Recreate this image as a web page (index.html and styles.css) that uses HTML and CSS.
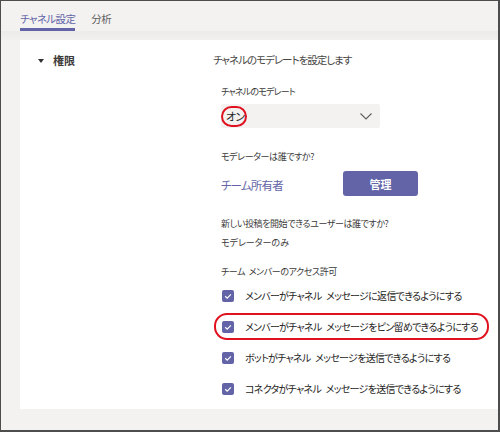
FILE: index.html
```html
<!DOCTYPE html>
<html lang="ja">
<head>
<meta charset="utf-8">
<link rel="stylesheet" href="styles.css">
</head>
<body>
<div class="frame">
  <div class="tabs">
    <div class="tab active">チャネル設定</div>
    <div class="tab">分析</div>
  </div>
  <div class="band"></div>
  <div class="card">
    <div class="left">
      <span class="caret"></span>
      <span class="section">権限</span>
    </div>
    <div class="right">
      <div class="title">チャネルのモデレートを設定します</div>
      <div class="sub">
        <div class="label l1">チャネルのモデレート</div>
        <div class="dropdown">
          <span class="value">オン</span>
          <svg class="chev" width="12" height="7" viewBox="0 0 12 7"><polyline points="0.5,0.5 6,6 11.5,0.5" fill="none" stroke="#605e5c" stroke-width="1.1"/></svg>
          <span class="ring"></span>
        </div>
        <div class="label l2">モデレーターは誰ですか?</div>
        <div class="owner-row">
          <span class="owner">チーム所有者</span>
          <button class="btn">管理</button>
        </div>
        <div class="label l3">新しい投稿を開始できるユーザーは誰ですか?</div>
        <div class="label l4">モデレーターのみ</div>
        <div class="label l5">チーム メンバーのアクセス許可</div>
        <div class="checks">
          <div class="check-row">
            <span class="box"><svg width="12" height="12" viewBox="0 0 12 12"><polyline points="3.2,6.2 5.2,8.1 8.9,4.3" fill="none" stroke="#fff" stroke-width="1.2"/></svg></span>
            <span class="ctext">メンバーがチャネル メッセージに返信できるようにする</span>
          </div>
          <div class="check-row">
            <span class="box"><svg width="12" height="12" viewBox="0 0 12 12"><polyline points="3.2,6.2 5.2,8.1 8.9,4.3" fill="none" stroke="#fff" stroke-width="1.2"/></svg></span>
            <span class="ctext">メンバーがチャネル メッセージをピン留めできるようにする</span>
            <span class="rect"></span>
          </div>
          <div class="check-row">
            <span class="box"><svg width="12" height="12" viewBox="0 0 12 12"><polyline points="3.2,6.2 5.2,8.1 8.9,4.3" fill="none" stroke="#fff" stroke-width="1.2"/></svg></span>
            <span class="ctext">ボットがチャネル メッセージを送信できるようにする</span>
          </div>
          <div class="check-row">
            <span class="box"><svg width="12" height="12" viewBox="0 0 12 12"><polyline points="3.2,6.2 5.2,8.1 8.9,4.3" fill="none" stroke="#fff" stroke-width="1.2"/></svg></span>
            <span class="ctext">コネクタがチャネル メッセージを送信できるようにする</span>
          </div>
        </div>
      </div>
    </div>
  </div>
</div>
</body>
</html>
```

FILE: styles.css
```css
* { box-sizing: border-box; }
html, body { margin: 0; padding: 0; }
body {
  font-family: "Noto Sans CJK JP", "Noto Sans", sans-serif;
  font-feature-settings: "palt";
  color: #252423;
  white-space: nowrap;
}
.frame {
  width: 500px;
  height: 432px;
  border: 1px solid #4d4d4d;
  border-right-width: 2px;
  border-bottom-width: 2px;
  background: #f3f2f1;
  display: flex;
  flex-direction: column;
}
.tabs {
  display: flex;
  gap: 16px;
  padding: 10px 0 0 19px;
  height: 30px;
}
.tab {
  font-size: 10.5px;
  letter-spacing: -0.6px;
  line-height: 16px;
  color: #616161;
  padding-bottom: 1px;
  border-bottom: 3px solid transparent;
}
.tab.active {
  color: #6264a7;
  border-bottom-color: #6264a7;
}
.band {
  height: 9px;
  background: linear-gradient(#ecebea, #f1f0ef);
}
.card {
  flex: 1;
  margin: 0 0 21px 19px;
  background: #fff;
  display: flex;
}
.left {
  width: 193px;
  padding: 12px 0 0 18px;
  display: flex;
  align-items: flex-start;
  gap: 9px;
}
.caret {
  margin-top: 7px;
  width: 0;
  height: 0;
  border-left: 3px solid transparent;
  border-right: 3px solid transparent;
  border-top: 4px solid #333;
}
.section {
  font-size: 11px;
  line-height: 16px;
  font-weight: bold;
  color: #3b3a39;
}
.right {
  flex: 1;
  padding-top: 12px;
}
.title {
  font-size: 10.5px;
  letter-spacing: -1px;
  line-height: 16px;
  color: #484644;
}
.sub {
  padding-left: 8px;
}
.label {
  font-size: 9px;
  letter-spacing: -0.4px;
  word-spacing: 2px;
  line-height: 14px;
  color: #3b3a39;
}
.l1 { margin-top: 17px; letter-spacing: -0.8px; }
.dropdown {
  position: relative;
  margin-top: 5px;
  width: 159px;
  height: 24px;
  background: #f3f2f1;
  display: flex;
  align-items: center;
  justify-content: space-between;
  padding: 0 8px 0 5px;
  border-radius: 2px;
}
.value {
  font-size: 11px;
  letter-spacing: -0.8px;
  color: #252423;
}
.ring {
  position: absolute;
  left: 0;
  top: 2px;
  width: 26px;
  height: 21px;
  border: 2px solid #e0121f;
  border-radius: 11px;
}
.l2 { margin-top: 22px; }
.owner-row {
  margin-top: 7px;
  display: flex;
  align-items: center;
}
.owner {
  width: 122px;
  font-size: 11.5px;
  letter-spacing: -0.8px;
  color: #6264a7;
  padding-top: 2px;
}
.btn {
  width: 75px;
  height: 25px;
  border: none;
  border-radius: 3px;
  background: #6264a7;
  color: #fff;
  font-family: inherit;
  font-size: 11px;
  font-weight: bold;
  padding: 0;
}
.l3 { margin-top: 21px; }
.l4 { margin-top: 5px; letter-spacing: 0; }
.l5 { margin-top: 15px; }
.checks { margin-top: 1px; }
.check-row {
  position: relative;
  height: 31px;
  display: flex;
  align-items: center;
  gap: 11px;
  padding-left: 1px;
}
.box {
  width: 12px;
  height: 12px;
  border-radius: 2px;
  background: #6264a7;
  display: flex;
}
.ctext {
  font-size: 10px;
  letter-spacing: -0.7px;
  word-spacing: 3px;
  color: #252423;
}
.rect {
  position: absolute;
  left: -7px;
  top: 2px;
  width: 275px;
  height: 27px;
  border: 2px solid #e0121f;
  border-radius: 13px;
}
```
